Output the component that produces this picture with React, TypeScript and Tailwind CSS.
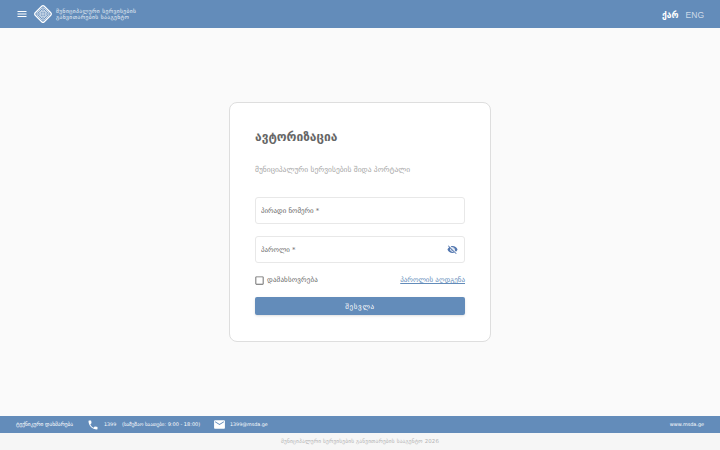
import { FC, useState } from "react";
import {
  MdCheckBoxOutlineBlank,
  MdEmail,
  MdMenu,
  MdPhone,
  MdVisibilityOff,
} from "react-icons/md";

const Logo: FC = () => {
  return (
    <svg viewBox="0 0 20 20" className="w-5 h-5 shrink-0" fill="none" stroke="white">
      <rect x="3.6" y="3.6" width="12.8" height="12.8" rx="1.8" strokeWidth="1.3" transform="rotate(45 10 10)" />
      <rect x="5" y="5" width="10" height="10" rx="2.6" strokeWidth="0.8" strokeOpacity="0.85" transform="rotate(45 10 10)" />
      <rect x="6.3" y="6.3" width="7.4" height="7.4" rx="2.6" strokeWidth="0.8" strokeOpacity="0.85" transform="rotate(45 10 10)" />
      <circle cx="10" cy="10" r="2.8" strokeWidth="0.8" strokeOpacity="0.85" />
      <circle cx="10" cy="10" r="1.2" strokeWidth="0.8" />
    </svg>
  );
};

const Header: FC = () => {
  return (
    <header className="h-7 shrink-0 bg-[#638cba] text-white flex items-center justify-between px-4">
      <div className="flex items-center">
        <MdMenu className="w-3 h-3" />
        <div className="ml-[5px] flex items-center gap-[3px]">
          <Logo />
          <div className="text-[5.5px] leading-[6px] tracking-[0.42px] whitespace-nowrap text-white/85">
            <div>მუნიციპალური სერვისების</div>
            <div>განვითარების სააგენტო</div>
          </div>
        </div>
      </div>
      <div className="flex items-center gap-[7px] pt-0.5">
        <button className="font-bold text-[8.5px]">ქარ</button>
        <button className="font-['Liberation_Sans',sans-serif] text-[8.5px] text-white/70">ENG</button>
      </div>
    </header>
  );
};

const LoginCard: FC = () => {
  const [personalId, setPersonalId] = useState<string>("");
  const [password, setPassword] = useState<string>("");

  return (
    <form
      onSubmit={(e) => e.preventDefault()}
      className="w-[262px] h-[240px] rounded-lg border border-[#dedede] bg-white px-[25px] flex flex-col"
    >
      <h1 className="mt-[26px] h-4 leading-4 text-[12px] font-bold text-[#666] whitespace-nowrap">
        ავტორიზაცია
      </h1>
      <p className="mt-[19px] h-3 leading-3 text-[7.5px] text-[#a6a6a6] whitespace-nowrap">
        მუნიციპალური სერვისების შიდა პორტალი
      </p>

      <input
        type="text"
        value={personalId}
        onChange={(e) => setPersonalId(e.target.value)}
        placeholder="პირადი ნომერი *"
        className="mt-[21px] h-[27px] w-full rounded-[3px] border border-[#e8e8e8] px-[5px] text-[6.9px] placeholder:text-[#666] outline-none"
      />
      <div className="mt-3 h-[27px] flex items-center rounded-[3px] border border-[#e8e8e8] pl-[5px] pr-1.5">
        <input
          type="password"
          value={password}
          onChange={(e) => setPassword(e.target.value)}
          placeholder="პაროლი *"
          className="flex-1 min-w-0 pt-0.5 text-[6.9px] placeholder:text-[#666] outline-none"
        />
        <MdVisibilityOff className="w-[11px] h-[11px] mb-px text-[#5478b0]" />
      </div>

      <div className="mt-[11px] h-3 flex items-center justify-between text-[7px] whitespace-nowrap">
        <label className="flex items-center gap-[2px] text-[#666] tracking-[0.15px]">
          <MdCheckBoxOutlineBlank className="w-[11px] h-[11px] -ml-px" />
          <span className="pt-px">დამახსოვრება</span>
        </label>
        <a href="#" className="pt-px text-[#638cba] underline">
          პაროლის აღდგენა
        </a>
      </div>

      <button
        type="submit"
        className="mt-[11px] h-[18px] w-full rounded-xs bg-[#638cba] text-white text-[7px] tracking-[0.7px] shadow-sm"
      >
        <span className="block pt-0.5">შესვლა</span>
      </button>
    </form>
  );
};

const Footer: FC = () => {
  return (
    <footer className="shrink-0">
      <div className="h-[17px] bg-[#638cba] text-white text-[5px] flex items-center justify-between px-4 whitespace-nowrap">
        <div className="flex items-center">
          <span className="w-[71px] text-[5.4px]">ტექნიკური დახმარება</span>
          <MdPhone className="w-3 h-3" />
          <span className="ml-[5px] w-[18px] text-[4.8px]">1399</span>
          <span className="w-[91px]">(სამუშაო საათები: 9:00 - 18:00)</span>
          <MdEmail className="w-[13px] h-[13px] -mx-[0.5px]" />
          <span className="ml-[5px] text-[4.8px]">1399@msda.ge</span>
        </div>
        <span className="text-[4.9px]">www.msda.ge</span>
      </div>
      <div className="h-[17px] bg-[#f6f6f6] text-[#b4b4b4] text-[5.4px] tracking-[0.17px] flex items-center justify-center whitespace-nowrap">
        მუნიციპალური სერვისების განვითარების სააგენტო 2026
      </div>
    </footer>
  );
};

export default function App() {
  return (
    <div className="h-screen flex flex-col bg-[#fafafa] font-['DejaVu_Sans',sans-serif] overflow-hidden">
      <Header />
      <main className="flex-1 flex items-center justify-center">
        <LoginCard />
      </main>
      <Footer />
    </div>
  );
}
